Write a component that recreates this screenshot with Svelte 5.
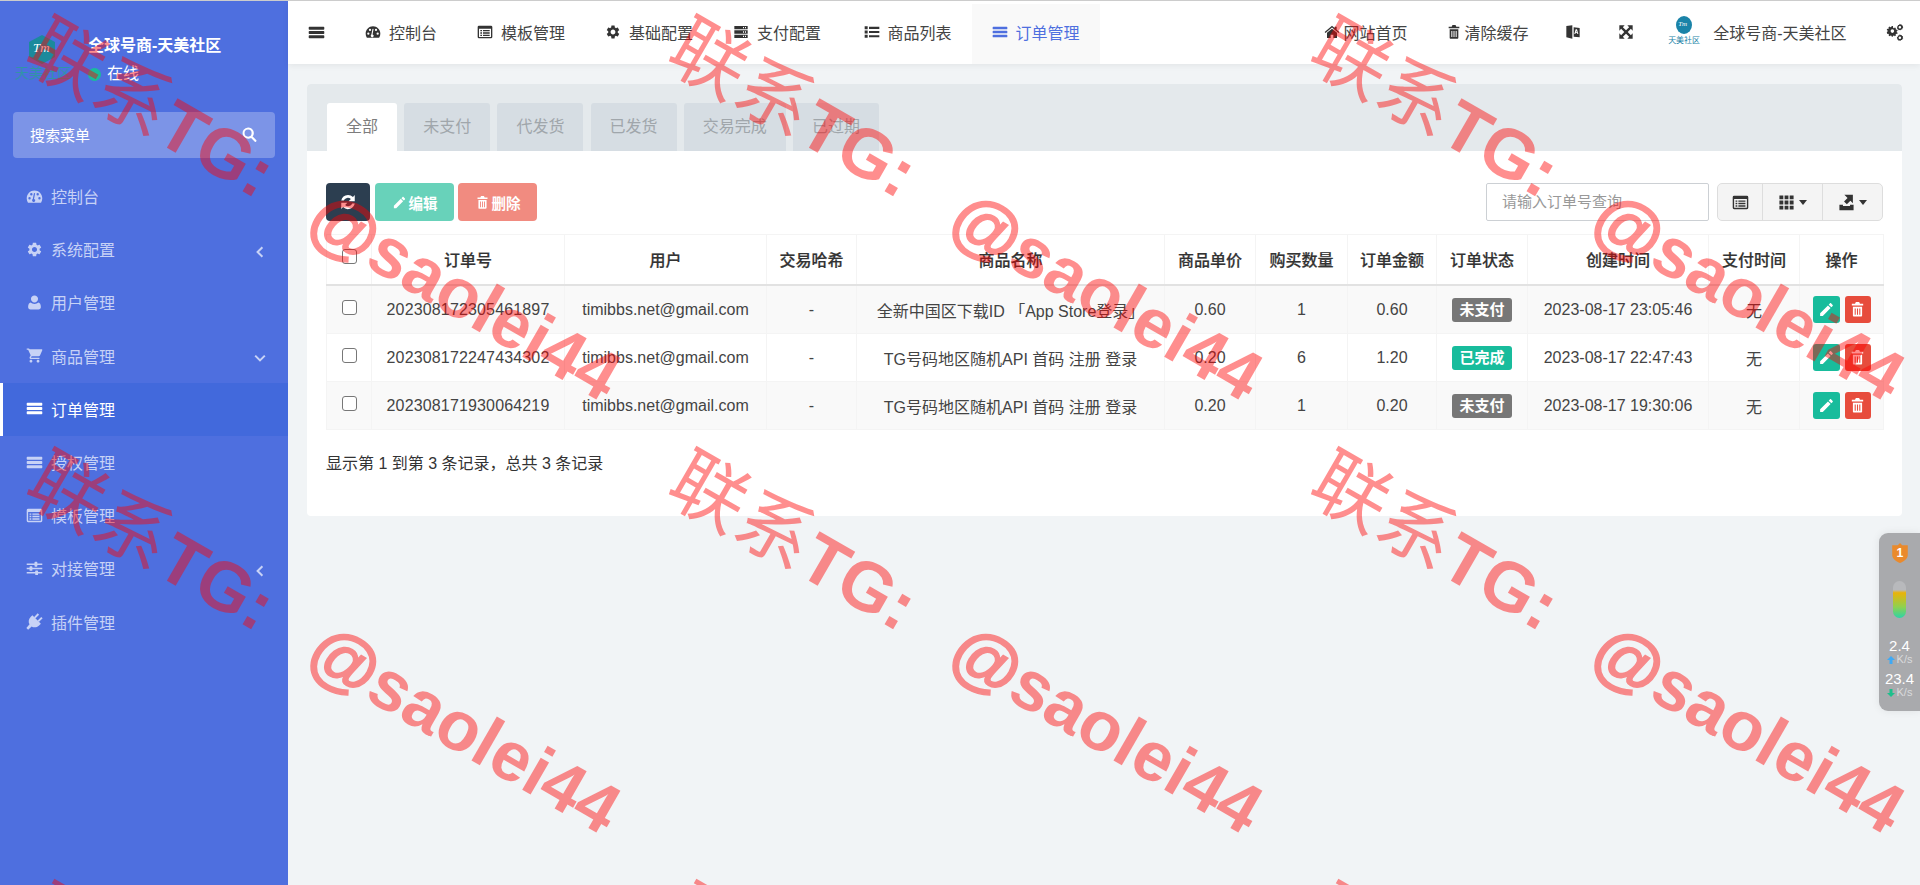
<script>
  const d = {
    gauge: 'M12 3.5C5.9 3.5 1 8.4 1 14.5c0 2.1.6 4.1 1.6 5.8.2.3.5.4.8.4h17.2c.3 0 .6-.1.8-.4 1-1.7 1.6-3.7 1.6-5.8C23 8.4 18.1 3.5 12 3.5zM5 16.2a1.7 1.7 0 1 1 0-3.4 1.7 1.7 0 0 1 0 3.4zM7.5 10.6a1.7 1.7 0 1 1 0-3.4 1.7 1.7 0 0 1 0 3.4zM13 17.5a2.2 2.2 0 1 1-3.4-1.8l1.5-8c.1-.5.5-.8 1-.7.5.1.8.5.7 1l-1.5 7.7c1 .2 1.7 1 1.7 1.8zM16.5 10.6a1.7 1.7 0 1 1 0-3.4 1.7 1.7 0 0 1 0 3.4zM19 16.2a1.7 1.7 0 1 1 0-3.4 1.7 1.7 0 0 1 0 3.4z',
    gear: 'M19.14 12.94c.04-.3.06-.61.06-.94 0-.32-.02-.64-.07-.94l2.03-1.58c.18-.14.23-.41.12-.61l-1.92-3.32c-.12-.22-.37-.29-.59-.22l-2.39.96c-.5-.38-1.03-.7-1.62-.94l-.36-2.54c-.04-.24-.24-.41-.48-.41h-3.84c-.24 0-.43.17-.47.41l-.36 2.54c-.59.24-1.13.57-1.62.94l-2.39-.96c-.22-.08-.47 0-.59.22L2.74 8.87c-.12.21-.08.47.12.61l2.03 1.58c-.05.3-.09.63-.09.94s.02.64.07.94l-2.03 1.58c-.18.14-.23.41-.12.61l1.92 3.32c.12.22.37.29.59.22l2.39-.96c.5.38 1.03.7 1.62.94l.36 2.54c.05.24.24.41.48.41h3.84c.24 0 .44-.17.47-.41l.36-2.54c.59-.24 1.13-.56 1.62-.94l2.39.96c.22.08.47 0 .59-.22l1.92-3.32c.12-.22.07-.47-.12-.61l-2.01-1.58zM12 15.6c-1.98 0-3.6-1.62-3.6-3.6s1.62-3.6 3.6-3.6 3.6 1.62 3.6 3.6-1.62 3.6-3.6 3.6z',
    user: 'M12 12c3 0 5-2.5 5-5.2C17 4.2 14.8 2 12 2S7 4.2 7 6.800C7 9.500 9 12 12 12zm-5.500 0C4.500 12.500 3 14.500 3 18.500 3 20.700 4.300 22 6.300 22h11.400c2 0 3.300-1.300 3.300-3.500 0-4-1.500-6-3.500-6.500-1.400 1.300-3.300 2-5.500 2s-4.100-.7-5.500-2z',
    cart: 'M7 18c-1.100 0-1.990.9-1.990 2S5.900 22 7 22s2-.9 2-2-.9-2-2-2zM1 2v2h2l3.600 7.590-1.350 2.450c-.16.28-.25.61-.25.96 0 1.100.9 2 2 2h12v-2H7.420c-.14 0-.25-.11-.25-.25l.03-.12.9-1.630h9.900c.75 0 1.410-.41 1.750-1.030L23 4.500c.3-.5 0-1.500-1-1.500H5.210l-.94-1H1zm16 16c-1.100 0-1.990.9-1.990 2s.89 2 1.990 2 2-.9 2-2-.9-2-2-2z',
    bars: 'M2 4h20a1 1 0 0 1 1 1v2a1 1 0 0 1-1 1H2a1 1 0 0 1-1-1V5a1 1 0 0 1 1-1zm0 6h20a1 1 0 0 1 1 1v2a1 1 0 0 1-1 1H2a1 1 0 0 1-1-1v-2a1 1 0 0 1 1-1zm0 6h20a1 1 0 0 1 1 1v2a1 1 0 0 1-1 1H2a1 1 0 0 1-1-1v-2a1 1 0 0 1 1-1z',
    listalt: 'M3 2.500h18a2 2 0 0 1 2 2v15a2 2 0 0 1-2 2H3a2 2 0 0 1-2-2v-15a2 2 0 0 1 2-2zm0 4.500v12c0 .3.2.5.5.5h17c.3 0 .5-.2.5-.5V7H3zm2 2h2.500v2H5V9zm4 0h10v2H9V9zm-4 3.500h2.500v2H5v-2zm4 0h10v2H9v-2zM5 16h2.500v2H5v-2zm4 0h10v2H9v-2z',
    sliders: 'M1 5h11V3.500c0-.5.4-.9.9-.9h2.200c.5 0 .9.4.9.9V5h7v2h-7v1.500c0 .5-.4.9-.9.9h-2.200a.9.9 0 0 1-.9-.9V7H1V5zm0 6h4V9.600c0-.5.4-.9.9-.9h2.200c.5 0 .9.4.9.9V11h14v2H9v1.400c0 .5-.4.9-.9.9H5.900a.9.9 0 0 1-.9-.9V13H1v-2zm0 6h12v-1.400c0-.5.4-.9.9-.9h2.200c.5 0 .9.4.9.9V17h6v2h-6v1.400c0 .5-.4.9-.9.9h-2.200a.9.9 0 0 1-.9-.9V19H1v-2z',
    plug: 'M11.500 5.500 16.500.5 18.500 2.500 13.500 7.500zM16.500 10.500 21.500 5.500 23.500 7.500 18.500 12.500zM9 3 21 15 18.500 17.500C15.500 20.500 11 21 8 19L3 23.500 .5 21 5 16C3 13 3.500 8.500 6.500 5.500z',
    search: 'M10 2a8 8 0 0 1 6.400 12.800l5.200 5.200a1.500 1.500 0 0 1-2.100 2.100l-5.200-5.200A8 8 0 1 1 10 2zm0 3a5 5 0 1 0 0 10 5 5 0 0 0 0-10z',
    home: 'M12 2.500 1 12l1.200 1.500L12 5.200l9.800 8.300L23 12l-4-3.500V4h-3v2zM12 7 4.500 13.300V21h5.500v-5h4v5h5.500v-7.700z',
    trash: 'M5.500 8h13v12.500c0 .8-.7 1.500-1.500 1.500H7c-.8 0-1.500-.7-1.500-1.500V8zm2.500 2.500v9h1.500v-9H8zm3.250 0v9h1.500v-9h-1.500zm3.250 0v9H16v-9h-1.500zM8.500 4l1.200-2.500h4.600L15.500 4H20v2.500H4V4h4.500z',
    pencil: 'M3 17.250V21h3.750L17.810 9.940l-3.750-3.750L3 17.250zM20.710 7.040c.39-.39.39-1.020 0-1.410l-2.340-2.340c-.39-.39-1.020-.39-1.410 0l-1.830 1.830 3.750 3.750 1.830-1.830z',
    refresh: 'M12 2.500c2.600 0 4.900 1 6.600 2.700L21 2.800V11h-8.200l3-3A5.900 5.900 0 0 0 6.300 10H3A9.300 9.300 0 0 1 12 2.500zM3 13h8.200l-3 3a5.900 5.900 0 0 0 9.500-2H21a9.300 9.300 0 0 1-15.600 4.800L3 21.200V13z',
    server: 'M2 3h20v5H2V3zm13 1.500v2h1.500v-2H15zm3 0v2h1.500v-2H18zM2 9.500h20v5H2v-5zm13 1.500v2h1.500v-2H15zm3 0v2h1.500v-2H18zM2 16h20v5H2v-5zm13 1.500v2h1.500v-2H15zm3 0v2h1.500v-2H18z',
    tasks: 'M1 3.500h4.500V8H1V3.500zm6.500.7H23v3.200H7.500V4.200zM1 9.800h4.500v4.500H1V9.800zm6.500.6H23v3.200H7.500v-3.200zM1 16h4.500v4.500H1V16zm6.500.7H23v3.200H7.500v-3.200z',
    expand: 'M2 2h8L7.300 4.700 12 9.400l4.700-4.700L14 2h8v8l-2.700-2.700L14.600 12l4.700 4.700L22 14v8h-8l2.700-2.700L12 14.600l-4.700 4.700L10 22H2v-8l2.700 2.700L9.400 12 4.700 7.300 2 10V2z',
    gears: 'M9.500 6.500l1.300.4.9-1 1.500.9-.4 1.300.9.900 1.300-.2.500 1.700-1.200.6v1.200l1.200.7-.5 1.600-1.300-.2-.9.900.4 1.300-1.500.9-.9-1-1.300.4-.5 1.300H7.700l-.4-1.300-1.300-.4-1 1-1.500-.9.4-1.300-.9-.9-1.300.2L1 11.900l1.200-.7V10L1 9.400l.5-1.700 1.300.2.900-.9-.4-1.300 1.500-.9 1 1 1.300-.4.400-1.300h1.700l.3 1.400zM8.500 8.400a2.400 2.400 0 1 0 0 4.800 2.400 2.400 0 0 0 0-4.800zM18.500 1l.9 1.100 1.400-.2.500 1.300 1.400.6-.3 1.400.6 1.200-1.200.8-.2 1.400-1.400.1-.8 1.100-1.300-.6-1.300.3-.7-1.200-1.300-.6.200-1.400-.5-1.300 1.200-.8.3-1.400 1.400 0zm0 3a1.700 1.700 0 1 0 0 3.400 1.700 1.700 0 0 0 0-3.400zM18.500 15l.9 1.100 1.400-.2.500 1.300 1.400.6-.3 1.400.6 1.200-1.200.8-.2 1.400-1.400.1-.8 1.100-1.300-.6-1.300.3-.7-1.200-1.300-.6.200-1.400-.5-1.300 1.200-.8.3-1.400 1.400 0zm0 3a1.700 1.700 0 1 0 0 3.400 1.700 1.700 0 0 0 0-3.400z',
    grid: 'M2 2h5.500v5.500H2V2zm7.300 0h5.400v5.500H9.300V2zm7.200 0H22v5.500h-5.500V2zM2 9.300h5.500v5.400H2V9.300zm7.300 0h5.400v5.400H9.300V9.300zm7.200 0H22v5.400h-5.500V9.300zM2 16.500h5.500V22H2v-5.500zm7.300 0h5.400V22H9.300v-5.500zm7.200 0H22v5.500h-5.500v-5.500z',
    exportIc: 'M9 1h12v12l-3.500-3.500-5 5-4-4 5-5L9 1zM2 15h5v2h10v-2h5v8H2v-8z',
    translate: 'M2 3l9-1v20l-9-2V3zm11 2 9 1v14l-9-1V5zm3 3-2 7h1.500l.4-1.500h2.200l.4 1.500H20l-2-7h-2zm1 2 .7 2.300h-1.400L17 10z'
  };
  const menu = [
    { ic: 'gauge', t: '控制台' },
    { ic: 'gear', t: '系统配置', c: 'l' },
    { ic: 'user', t: '用户管理' },
    { ic: 'cart', t: '商品管理', c: 'd' },
    { ic: 'bars', t: '订单管理', a: true },
    { ic: 'bars', t: '授权管理' },
    { ic: 'listalt', t: '模板管理' },
    { ic: 'sliders', t: '对接管理', c: 'l' },
    { ic: 'plug', t: '插件管理' }
  ];
  const nav = [
    { ic: 'gauge', t: '控制台' },
    { ic: 'listalt', t: '模板管理' },
    { ic: 'gear', t: '基础配置' },
    { ic: 'server', t: '支付配置' },
    { ic: 'tasks', t: '商品列表' },
    { ic: 'bars', t: '订单管理', a: true }
  ];
  const tabs = ['全部', '未支付', '代发货', '已发货', '交易完成', '已过期'];
  const heads = ['订单号', '用户', '交易哈希', '商品名称', '商品单价', '购买数量', '订单金额', '订单状态', '创建时间', '支付时间', '操作'];
  const widths = [45, 193, 202, 90, 308, 91, 92, 89, 91, 181, 91, 84];
  const rows = [
    ['202308172305461897', '全新中国区下载ID 「App Store登录」', '0.60', '1', '0.60', '未支付', '2023-08-17 23:05:46'],
    ['202308172247434302', 'TG号码地区随机API 首码 注册 登录', '0.20', '6', '1.20', '已完成', '2023-08-17 22:47:43'],
    ['202308171930064219', 'TG号码地区随机API 首码 注册 登录', '0.20', '1', '0.20', '未支付', '2023-08-17 19:30:06']
  ];
  const tiles = Array.from({ length: 12 }, (_, i) => i);
</script>

{#snippet icon(name, cls = '')}
  <svg class="ic {cls}" viewBox="0 0 24 24" fill-rule="evenodd" aria-hidden="true"><path d={d[name]} /></svg>
{/snippet}

<div class="page">
  <aside class="side">
    <div class="brand">
      <div class="logo">
        <svg viewBox="0 0 30 30" width="30" height="30" aria-hidden="true"><polygon points="15,0 28,7 28,22 15,29 2,22 2,7" fill="#1b8a9c" /></svg>
        <span class="logo-tm">Tm</span>
        <span class="logo-cn">天美社区</span>
      </div>
      <div class="who">
        <div class="who-name">全球号商-天美社区</div>
        <div class="who-state"><i class="dot"></i>在线</div>
      </div>
    </div>
    <div class="sbox"><span>搜索菜单</span>{@render icon('search', 'sic')}</div>
    <ul class="menu">
      {#each menu as m}
        <li class:active={m.a}>
          {@render icon(m.ic, 'mic')}
          <span class="mt">{m.t}</span>
          {#if m.c}
            <svg class="chev" class:down={m.c === 'd'} viewBox="0 0 10 10" aria-hidden="true"><path d="M7 1 3 5l4 4" fill="none" stroke="currentColor" stroke-width="1.700" /></svg>
          {/if}
        </li>
      {/each}
    </ul>
  </aside>

  <div class="main">
    <header class="top">
      <div class="burger">{@render icon('bars', 'bic')}</div>
      <nav class="nav">
        {#each nav as n}
          <div class="nitem" class:on={n.a}>{@render icon(n.ic, 'nic')}<span>{n.t}</span></div>
        {/each}
      </nav>
      <div class="right">
        <div class="r r-home">{@render icon('home', 'ric')}<span>网站首页</span></div>
        <div class="r r-clear">{@render icon('trash', 'ric')}<span>清除缓存</span></div>
        <div class="r r-tr">{@render icon('translate', 'ric')}</div>
        <div class="r r-fs">{@render icon('expand', 'ric')}</div>
        <div class="r r-user">
          <div class="ava"><i>Tm</i><b>天美社区</b></div>
          <span>全球号商-天美社区</span>
        </div>
        <div class="r r-gears">{@render icon('gears', 'gic')}</div>
      </div>
    </header>

    <section class="content">
      <div class="card">
        <div class="tabs">
          {#each tabs as t, i}
            <div class="tab" class:cur={i === 0}>{t}</div>
          {/each}
        </div>
        <div class="body">
          <div class="toolbar">
            <button class="btn dark">{@render icon('refresh', 'tic')}</button>
            <button class="btn green">{@render icon('pencil', 'tic')}编辑</button>
            <button class="btn red">{@render icon('trash', 'tic')}删除</button>
            <div class="spring"></div>
            <div class="q">请输入订单号查询</div>
            <div class="grp">
              <div class="g g1">{@render icon('listalt', 'gr')}</div>
              <div class="g g2">{@render icon('grid', 'gr')}<i class="caret"></i></div>
              <div class="g g3">{@render icon('exportIc', 'gr')}<i class="caret"></i></div>
            </div>
          </div>
          <table>
            <colgroup>
              {#each widths as w}<col style="width:{w}px" />{/each}
            </colgroup>
            <thead>
              <tr>
                <th><i class="cb"></i></th>
                {#each heads as h}<th>{h}</th>{/each}
              </tr>
            </thead>
            <tbody>
              {#each rows as r}
                <tr>
                  <td><i class="cb"></i></td>
                  <td class="num">{r[0]}</td>
                  <td>timibbs.net@gmail.com</td>
                  <td>-</td>
                  <td>{r[1]}</td>
                  <td>{r[2]}</td>
                  <td>{r[3]}</td>
                  <td>{r[4]}</td>
                  <td><span class="badge" class:ok={r[5] === '已完成'}>{r[5]}</span></td>
                  <td>{r[6]}</td>
                  <td>无</td>
                  <td class="acts">
                    <span class="act a-edit">{@render icon('pencil', 'aic')}</span><span class="act a-del">{@render icon('trash', 'aic')}</span>
                  </td>
                </tr>
              {/each}
            </tbody>
          </table>
          <div class="foot">显示第 1 到第 3 条记录，总共 3 条记录</div>
        </div>
      </div>
    </section>
  </div>

  <div class="widget">
    <svg class="shield" viewBox="0 0 16 18" width="18" height="20" aria-hidden="true">
      <path d="M8 0l2 2h5v9c0 3-4 6-7 7-3-1-7-4-7-7V2h5z" fill="#ea8a2c" />
      <text x="8" y="13" text-anchor="middle" font-size="11" font-weight="700" fill="#fff" font-family="Liberation Sans">1</text>
    </svg>
    <div class="pill"></div>
    <div class="sp sp1"><b>2.4</b><small><svg viewBox="0 0 8 8" width="8" height="8" aria-hidden="true"><path d="M4 0 8 4H5.500v4h-3V4H0z" fill="#3fa9f5" /></svg> K/s</small></div>
    <div class="sp"><b>23.4</b><small><svg viewBox="0 0 8 8" width="8" height="8" aria-hidden="true"><path d="M4 8 8 4H5.500V0h-3v4H0z" fill="#1dbf8c" /></svg> K/s</small></div>
  </div>

  <div class="wm" aria-hidden="true">
    {#each tiles as t}
      <div class="wt"><span class="w1"><span class="cjk">联系</span>TG:</span><span class="w2"><span class="at">@</span>saolei44</span></div>
    {/each}
  </div>
</div>

<style>
  :global(body) { margin: 0; background: #f1f4f6; }
  .page {
    position: relative; display: flex; width: 1920px; height: 885px; overflow: hidden;
    border-top: 1px solid #ccc; box-sizing: border-box; background: #f1f4f6;
    font-family: "Liberation Sans", "Noto Sans CJK SC", sans-serif; font-size: 16px; color: #333;
  }
  .ic { display: block; fill: currentColor; flex: none; }

  .side { width: 288px; flex: none; background: #4e6fdf; color: #fff; }
  .brand { display: flex; height: 111px; box-sizing: border-box; padding-top: 33px; }
  .logo { position: relative; width: 88px; flex: none; }
  .logo svg { position: absolute; left: 27px; top: 1px; }
  .logo-tm { position: absolute; left: 33px; top: 6px; color: #fff; font: italic 13px "Liberation Serif", serif; }
  .logo-cn { position: absolute; left: 15px; top: 31px; font-size: 14px; color: #2c9a9e; line-height: 16px; opacity: .85; }
  .who-name { font-size: 16px; font-weight: 700; line-height: 24px; }
  .who-state { display: flex; align-items: center; font-size: 16px; line-height: 24px; margin-top: 4px; }
  .dot { width: 13px; height: 13px; border-radius: 50%; background: #18bc9c; margin-right: 6px; }

  .sbox {
    display: flex; align-items: center; justify-content: space-between; box-sizing: border-box;
    margin: 0 13px; height: 46px; padding: 0 17px 1px; border-radius: 4px; background: #7c94e7; font-size: 15px;
  }
  :global(.sic) { width: 17px; height: 17px; }
  .menu { list-style: none; margin: 12px 0 0; padding: 0; }
  .menu li {
    display: flex; align-items: center; height: 53.2px; box-sizing: border-box;
    padding: 0 22px 1px 26px; color: #c7d2f6; position: relative;
  }
  :global(.mic) { width: 17px; height: 17px; margin-right: 8px; }
  .menu li.active { background: #4269dc; color: #fff; box-shadow: inset 3px 0 0 #fff; }
  .chev { width: 12px; height: 12px; margin-left: auto; color: #c7d2f6; transform: translateY(3px); }
  .chev.down { transform: translateY(2px) rotate(-90deg); }

  .main { flex: 1; min-width: 0; display: flex; flex-direction: column; }
  .top {
    display: flex; align-items: stretch; height: 63px; flex: none; background: #fff;
    box-shadow: 0 2px 6px rgba(0, 0, 0, .06); position: relative;
  }
  .burger { width: 57px; display: flex; align-items: center; padding-left: 20px; box-sizing: border-box; color: #333; }
  :global(.bic) { width: 17px; height: 17px; }
  .nav { display: flex; }
  .nitem { display: flex; align-items: center; padding: 0 20px 2px; color: #444; white-space: nowrap; }
  .nitem:nth-child(5) { margin-left: 2.5px; }
  :global(.nic) { width: 16px; height: 16px; margin-right: 8px; color: #333; }
  .nitem.on { background: #f9f9f9; color: #4e6fdf; margin-top: 3px; padding-bottom: 5px; }
  .nitem.on :global(.nic) { color: #4e6fdf; }
  .right { flex: 1; position: relative; display: flex; align-items: center; color: #444; padding-bottom: 2px; }
  .r { display: flex; align-items: center; white-space: nowrap; }
  :global(.ric) { width: 16px; height: 16px; color: #333; margin-right: 4px; }
  .r-home { margin-left: 224px; }
  .r-clear { margin-left: 38px; }
  .r-clear :global(.ric) { margin-right: 3px; }
  .r-tr { margin-left: 36px; }
  .r-fs { margin-left: 33px; }
  .r-user { margin-left: 30.5px; }
  .ava { position: relative; width: 31px; height: 32px; margin-right: 14px; }
  .ava::before { content: ""; position: absolute; left: 8px; top: 0; width: 16px; height: 18px; border-radius: 50%; background: #1a83a8; }
  .ava i { position: absolute; left: 10px; top: 4px; font: italic 7px "Liberation Serif", serif; color: #fff; }
  .ava b { position: absolute; left: 0; top: 20px; font-size: 8px; font-weight: 400; line-height: 10px; color: #1a83a8; white-space: nowrap; }
  .r-gears { margin-left: 40px; }
  :global(.gic) { width: 18px; height: 18px; color: #333; }

  .content { padding: 20px 18px 0 19px; }
  .card { border-radius: 4px; background: #fff; overflow: hidden; }
  .tabs { display: flex; gap: 7.2px; height: 67px; box-sizing: border-box; padding: 19px 0 0 20px; background: #e4e9ec; }
  .tab {
    padding: 0 19px; height: 48px; line-height: 47px; border-radius: 3px 3px 0 0;
    background: #d6dde3; color: #a0a6ab; white-space: nowrap;
  }
  .tab.cur { background: #fff; color: #7d7d7d; }
  .body { padding: 32px 19px 0 19px; height: 365px; box-sizing: border-box; }
  .toolbar { display: flex; align-items: stretch; height: 38px; gap: 5px; }
  .btn {
    display: flex; align-items: center; justify-content: center; padding: 0; border: 0; border-radius: 4px;
    color: #fff; font: 700 14.500px "Liberation Sans", "Noto Sans CJK SC", sans-serif;
  }
  :global(.tic) { width: 15px; height: 15px; margin-right: 2px; }
  .dark { width: 44px; background: #2c3e50; }
  .dark :global(.tic) { width: 18px; height: 18px; margin: 0; }
  .green { width: 79px; background: #68d2ba; }
  .red { width: 79px; background: #f18b80; margin-left: -1px; }
  .spring { flex: 1; }
  .q {
    width: 223px; box-sizing: border-box; border: 1px solid #ccd0d4; padding-left: 15px; line-height: 36px;
    font-size: 15px; color: #999; border-radius: 2px;
  }
  .grp {
    display: flex; margin-left: 3px; width: 166px; box-sizing: border-box; border: 1px solid #ddd;
    border-radius: 5px; background: #f4f4f4; color: #333;
  }
  .g { display: flex; align-items: center; justify-content: center; border-right: 1px solid #ddd; box-sizing: border-box; }
  .g:last-child { border-right: 0; }
  .g1 { width: 45px; } .g2 { width: 60px; } .g3 { flex: 1; }
  :global(.gr) { width: 17px; height: 17px; }
  .caret { width: 0; height: 0; margin-left: 4px; border: 4px solid transparent; border-top: 5px solid #333; border-bottom: 0; }

  table { margin-top: 13px; width: 1557px; table-layout: fixed; border-collapse: collapse; color: #333; }
  th, td { border: 1px solid #f4f4f4; text-align: center; padding: 0; white-space: nowrap; overflow: visible; }
  th { height: 47px; padding-bottom: 2px; font-weight: 500; color: #333; border-bottom: 2px solid #e2e2e2; -webkit-text-stroke: .2px #333; }
  td { height: 47px; color: #444; }
  td.num { letter-spacing: .15px; }
  tbody tr:nth-child(odd) td { background: #f9f9f9; }
  .cb {
    display: block; width: 13px; height: 13px; margin: 0 auto 4px; border: 1px solid #777; border-radius: 3px; background: #fff;
  }
  .badge {
    display: inline-block; width: 60px; height: 24px; line-height: 23px; border-radius: 3px; background: #777;
    color: #fff; font-size: 15px; font-weight: 700; vertical-align: middle;
  }
  .badge.ok { background: #18bc9c; }
  .acts { font-size: 0; }
  .act { display: inline-flex; align-items: center; justify-content: center; height: 27px; border-radius: 3px; vertical-align: middle; color: #fff; }
  .a-edit { width: 27px; background: #18bc9c; }
  .a-del { width: 26px; background: #e74c3c; margin-left: 5px; }
  :global(.aic) { width: 17px; height: 17px; }
  .foot { margin-top: 24px; line-height: 20px; color: #333; }

  .widget {
    position: absolute; left: 1879px; top: 532px; width: 41px; height: 178px; box-sizing: border-box; padding-top: 10px;
    background: #a9aaad; border-radius: 9px 0 0 9px; box-shadow: 0 0 8px rgba(0, 0, 0, .08); color: #fff;
    display: flex; flex-direction: column; align-items: center; text-align: center; line-height: 1;
  }
  .shield { display: block; flex: none; }
  .pill {
    width: 13px; height: 37px; margin: 18px 0 20px; border-radius: 7px; flex: none;
    background: linear-gradient(#b8b9bc 0 24%, #eab308 32%, #8fd14f 70%, #2dd4a7 100%);
  }
  .sp b { display: block; font-weight: 400; font-size: 15px; }
  .sp small { display: flex; align-items: center; justify-content: center; gap: 2px; margin-top: 1px; font-size: 11px; color: #d9dadc; white-space: nowrap; }
  .sp1 { margin-bottom: 6px; }

  .wm {
    position: absolute; left: 0; top: 0; width: 2600px; height: 1300px; display: grid; pointer-events: none;
    grid-template-columns: repeat(4, 642px); grid-auto-rows: 433px; z-index: 5;
  }
  .wt { position: relative; }
  .w1, .w2 {
    position: absolute; white-space: nowrap; color: #f00; opacity: .44; line-height: 1;
    font-size: 70px; font-weight: 700; transform: translate(-50%, -50%) rotate(30deg);
  }
  .w1 { left: 152px; top: 108px; }
  .w1 .cjk { font-size: 76px; font-weight: 400; }
  .w2 { left: 465px; top: 295px; }
  .at { -webkit-text-stroke: 1.5px #f00; }
</style>
